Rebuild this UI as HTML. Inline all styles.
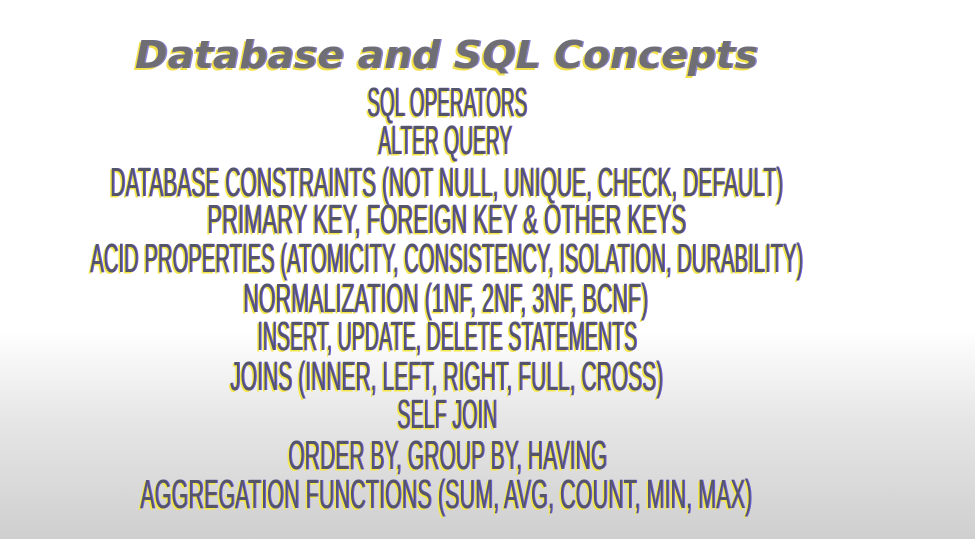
<!DOCTYPE html>
<html><head><meta charset="utf-8"><style>
html,body{margin:0;padding:0}
body{width:975px;height:539px;overflow:hidden;background:linear-gradient(180deg,#fff 0,#fff 330px,#e6e6e6 420px,#cfcfcf 539px)}
svg{position:absolute;left:0;top:0}
.t{font-family:"Liberation Sans Narrow","Liberation Sans",sans-serif;font-size:24px;font-weight:normal}
.h{font-family:"DejaVu Sans","Liberation Sans",sans-serif;font-size:38px;font-weight:bold;font-style:italic}
</style></head><body>
<svg width="975" height="539" viewBox="0 0 975 539">
<defs>
<g id="T">
<g class="t">
<text transform="translate(367,116) scale(1,1.68)" textLength="160" lengthAdjust="spacingAndGlyphs">SQL OPERATORS</text>
<text transform="translate(378,154) scale(1,1.68)" textLength="134" lengthAdjust="spacingAndGlyphs">ALTER QUERY</text>
<text transform="translate(110,196) scale(1,1.68)" textLength="673" lengthAdjust="spacingAndGlyphs">DATABASE CONSTRAINTS (NOT NULL, UNIQUE, CHECK, DEFAULT)</text>
<text transform="translate(207,233) scale(1,1.68)" textLength="479" lengthAdjust="spacingAndGlyphs">PRIMARY KEY, FOREIGN KEY &amp; OTHER KEYS</text>
<text transform="translate(90,272) scale(1,1.68)" textLength="713" lengthAdjust="spacingAndGlyphs">ACID PROPERTIES (ATOMICITY, CONSISTENCY, ISOLATION, DURABILITY)</text>
<text transform="translate(243,312) scale(1,1.68)" textLength="405" lengthAdjust="spacingAndGlyphs">NORMALIZATION (1NF, 2NF, 3NF, BCNF)</text>
<text transform="translate(257,350) scale(1,1.68)" textLength="380" lengthAdjust="spacingAndGlyphs">INSERT, UPDATE, DELETE STATEMENTS</text>
<text transform="translate(230,390) scale(1,1.68)" textLength="433" lengthAdjust="spacingAndGlyphs">JOINS (INNER, LEFT, RIGHT, FULL, CROSS)</text>
<text transform="translate(397,428) scale(1,1.68)" textLength="100" lengthAdjust="spacingAndGlyphs">SELF JOIN</text>
<text transform="translate(288,469) scale(1,1.68)" textLength="319" lengthAdjust="spacingAndGlyphs">ORDER BY, GROUP BY, HAVING</text>
<text transform="translate(140,508) scale(1,1.68)" textLength="612" lengthAdjust="spacingAndGlyphs">AGGREGATION FUNCTIONS (SUM, AVG, COUNT, MIN, MAX)</text>
</g>
</g>
<text id="H" class="h" x="135" y="68" textLength="623" lengthAdjust="spacingAndGlyphs">Database and SQL Concepts</text>
</defs>
<use href="#H" x="-2" y="2" fill="#f2e14a"/>
<use href="#H" x="1.5" y="0" fill="#8a84d0"/>
<use href="#H" x="0" y="0" fill="#6e6e74"/>
<use href="#T" x="-1.5" y="1.5" fill="#f5e64a"/>
<use href="#T" x="1" y="0" fill="#6a60e0"/>
<use href="#T" x="0" y="0" fill="#55556a"/>
</svg>
</body></html>
